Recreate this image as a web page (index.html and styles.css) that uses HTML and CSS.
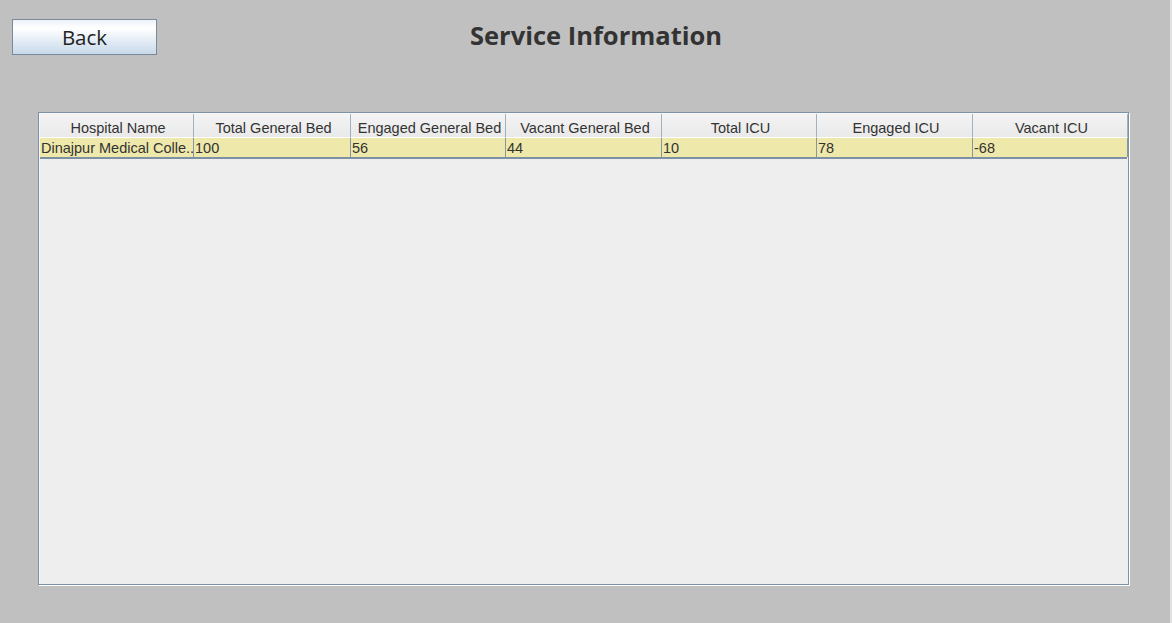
FILE: index.html
```html
<!DOCTYPE html>
<html>
<head>
<meta charset="utf-8">
<link rel="stylesheet" href="styles.css">
</head>
<body>
<div class="app">
  <div class="topbar">
    <button class="back">Back</button>
    <h1 class="title">Service Information</h1>
  </div>
  <div class="pane">
    <div class="inner">
      <div class="row head">
        <div class="cell">Hospital Name</div>
        <div class="cell">Total General Bed</div>
        <div class="cell">Engaged General Bed</div>
        <div class="cell">Vacant General Bed</div>
        <div class="cell">Total ICU</div>
        <div class="cell">Engaged ICU</div>
        <div class="cell">Vacant ICU</div>
      </div>
      <div class="row data">
        <div class="cell">Dinajpur Medical Colle..</div>
        <div class="cell">100</div>
        <div class="cell">56</div>
        <div class="cell">44</div>
        <div class="cell">10</div>
        <div class="cell">78</div>
        <div class="cell">-68</div>
      </div>
    </div>
  </div>
</div>
</body>
</html>
```
FILE: styles.css
```css
html, body {
  margin: 0;
  padding: 0;
  background: #c0c0c0;
  height: 100%;
}
.app {
  width: 1172px;
  height: 623px;
  box-sizing: border-box;
  padding: 19px 0 0 12px;
  border-right: 2px solid #e2e2e2;
  font-family: "Liberation Sans", Arial, sans-serif;
}
.topbar {
  display: flex;
  align-items: flex-start;
  height: 93px;
}
.back {
  width: 145px;
  height: 36px;
  box-sizing: border-box;
  border: 1px solid #7a8a9a;
  background: linear-gradient(#eef3f9 0%, #ffffff 25%, #dde8f3 70%, #c8d9ea 100%);
  font-family: "Open Sans", "Noto Sans", sans-serif;
  font-size: 20.5px;
  color: #222;
  padding: 0;
  line-height: 32px;
}
.title {
  margin: 0 0 0 313px;
  font-family: "Open Sans", "Noto Sans", sans-serif;
  font-weight: 700;
  font-size: 25.5px;
  color: #333;
  line-height: 32px;
}
.pane {
  margin-left: 26px;
  width: 1091px;
  height: 473px;
  box-sizing: border-box;
  border: 1px solid #7e91a4;
  background: #eeeeee;
  padding: 1px;
  box-shadow: 1px 1px 0 #ffffff, inset 1px 1px 0 #f8f8f8;
}
.inner {
  background: #eeeeee;
  height: 100%;
}
.row {
  display: grid;
  grid-template-columns: 154px 157px 155px 156px 155px 156px 155px;
  font-size: 14.5px;
  color: #333;
}
.head .cell {
  height: 24px;
  box-sizing: border-box;
  text-align: center;
  line-height: 28px;
  padding-left: 3px;
  background: linear-gradient(#f4f4f4, #e9e9e9);
  border-right: 1px solid #a3b0bd;
  border-bottom: 1px solid #ffffff;
  white-space: nowrap;
  overflow: hidden;
}
.data {
  border-bottom: 2px solid #7e91a4;
}
.data .cell {
  height: 19px;
  line-height: 21px;
  background: #eee8aa;
  border-right: 1px solid #8895a2;
  padding-left: 1px;
  white-space: nowrap;
  overflow: hidden;
}
```
